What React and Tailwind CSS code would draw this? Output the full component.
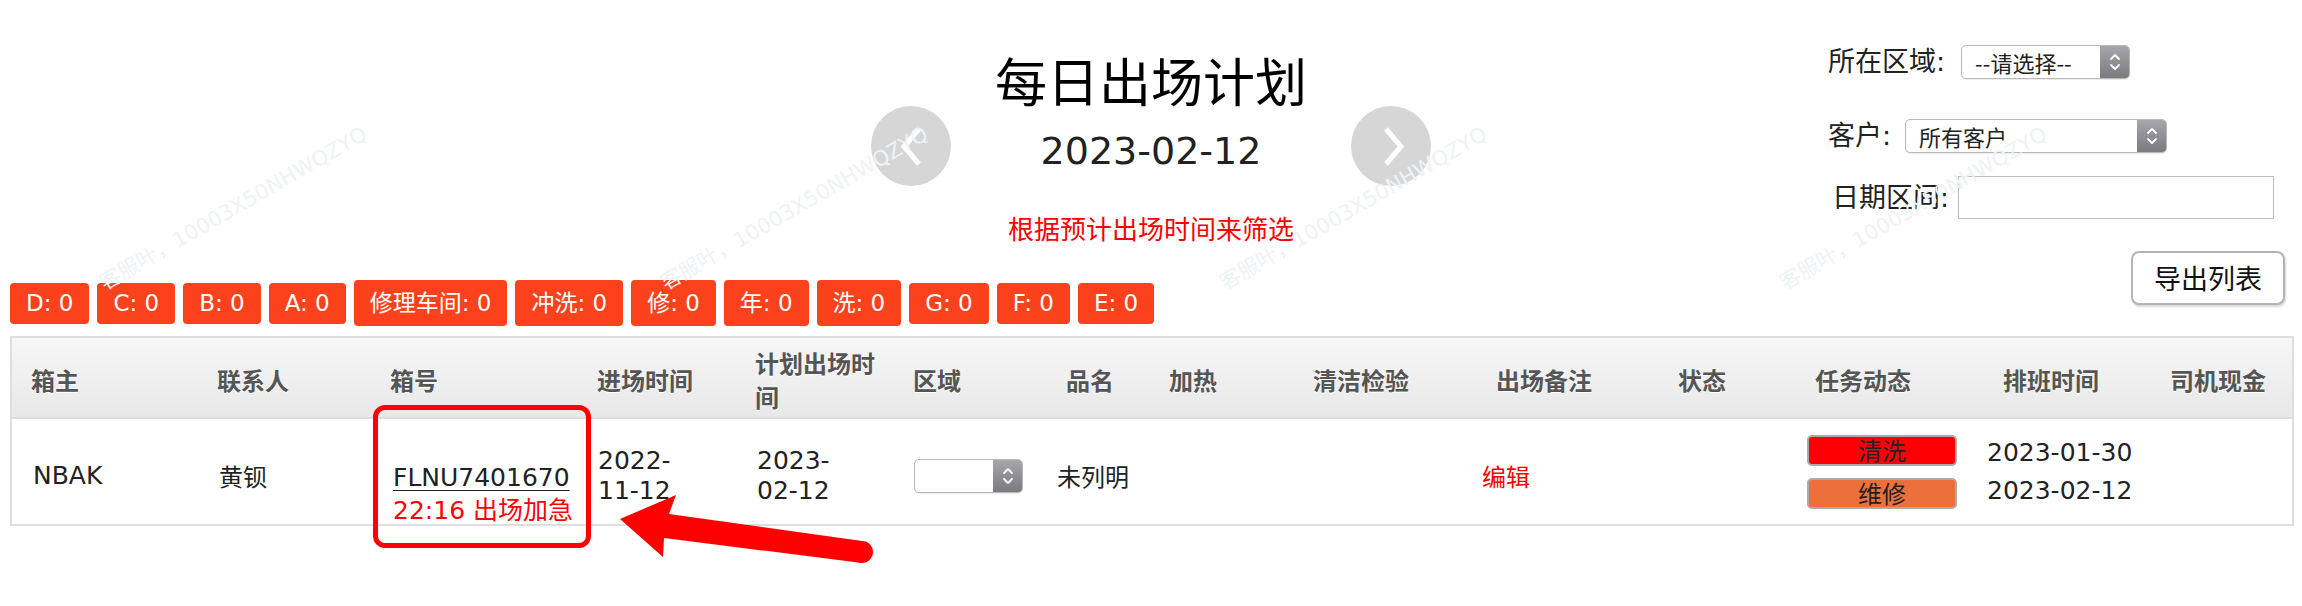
import React from 'react';

const mix = "font-['DejaVu_Sans','Noto_Sans_CJK_SC',sans-serif]";
const cjk = "font-['Noto_Sans_CJK_SC',sans-serif]";

const counts = [
  { label: 'D', wide: false },
  { label: 'C', wide: false },
  { label: 'B', wide: false },
  { label: 'A', wide: false },
  { label: '修理车间', wide: true },
  { label: '冲洗', wide: true },
  { label: '修', wide: true },
  { label: '年', wide: true },
  { label: '洗', wide: true },
  { label: 'G', wide: false },
  { label: 'F', wide: false },
  { label: 'E', wide: false },
];

const headers = [
  ['箱主', 'w-[186px]'],
  ['联系人', 'w-[173px]'],
  ['箱号', 'w-[207px]'],
  ['进场时间', 'w-[158px]'],
  ['计划出场时间', 'w-[158px]'],
  ['区域', 'w-[153px]'],
  ['品名', 'w-[103px]'],
  ['加热', 'w-[144px]'],
  ['清洁检验', 'w-[183px]'],
  ['出场备注', 'w-[182px]'],
  ['状态', 'w-[137px]'],
  ['任务动态', 'w-[188px]'],
  ['排班时间', 'w-[167px]'],
  ['司机现金', 'flex-1'],
];

const watermarks = ['left-[107px]', 'left-[668px]', 'left-[1227px]', 'left-[1787px]'];

const Chevrons = () => (
  <svg width="12" height="22" viewBox="0 0 12 22">
    <path d="M2 8 L6 4 L10 8 M2 14 L6 18 L10 14" fill="none" stroke="#fff" strokeWidth="1.8" strokeLinecap="round" strokeLinejoin="round" />
  </svg>
);

const FakeSelect = ({ width, text }) => (
  <div className={`flex h-[34px] ${width} overflow-hidden rounded-[5px] border border-[#b9b9b9] bg-white shadow-[0_1px_1px_rgba(0,0,0,0.08)]`}>
    <div className={`${cjk} flex flex-1 items-center pl-[13px] text-[22px] text-[#222]`}>{text}</div>
    <div className="flex w-[29px] items-center justify-center bg-linear-to-b from-[#a6a6ab] to-[#7a7a7f]">
      <Chevrons />
    </div>
  </div>
);

const CircleBtn = ({ right }) => (
  <div className="flex h-[80px] w-[80px] items-center justify-center rounded-full bg-[#d6d6d6]">
    <svg width="30" height="45" viewBox="0 0 30 45" className={right ? 'ml-[6px]' : ''}>
      {right ? (
        <path d="M7 5 L22 22.5 L7 40" fill="none" stroke="#fff" strokeWidth="5" />
      ) : (
        <path d="M23 5 L8 22.5 L23 40" fill="none" stroke="#fff" strokeWidth="5" />
      )}
    </svg>
  </div>
);

const App = () => {
  return (
    <div className={`relative min-h-[606px] w-full overflow-hidden bg-white ${mix} text-[#222]`}>
      {/* top: title block + filters */}
      <div className="grid h-[251px] grid-cols-[1fr_auto_1fr]">
        <div />
        <div className="flex flex-col items-center pt-[54px]">
          <h1 className={`${cjk} text-[52px] leading-[52px] text-black`}>每日出场计划</h1>
          <div className="flex items-center gap-[90px]">
            <CircleBtn />
            <div className="mt-[10px] text-[38px] leading-[38px] text-[#222]">2023-02-12</div>
            <CircleBtn right />
          </div>
          <p className={`${cjk} mt-[29px] text-[26px] leading-[26px] text-[#ff0000]`}>根据预计出场时间来筛选</p>
        </div>
        <div className="mr-[28px] flex w-[446px] flex-col justify-self-end pt-[45px]">
          <div className="flex items-center gap-[16px]">
            <span className="text-[27px] leading-[34px]">所在区域:</span>
            <FakeSelect width="w-[169px]" text="--请选择--" />
          </div>
          <div className="mt-[40px] flex items-center gap-[14px]">
            <span className="text-[27px] leading-[34px]">客户:</span>
            <FakeSelect width="w-[262px]" text="所有客户" />
          </div>
          <div className="mt-[23px] flex items-center justify-between">
            <span className="pl-[4px] text-[27px] leading-[34px]">日期区间:</span>
            <div className="h-[43px] w-[316px] border border-[#bdbdbd] bg-white" />
          </div>
        </div>
      </div>

      {/* counters + export */}
      <div className="flex items-start justify-between pl-[10px] pr-[17px]">
        <div className="mt-[29px] flex h-[46px] items-center gap-[8px]">
          {counts.map((c) => (
            <div
              key={c.label}
              className={`flex items-center rounded-[4px] bg-[#fc421c] px-[16px] text-[23px] text-white ${c.wide ? 'h-[46px]' : 'h-[41px]'}`}
            >
              {c.label}: 0
            </div>
          ))}
        </div>
        <button className={`${cjk} h-[54px] w-[154px] rounded-[8px] border-2 border-[#b4b4b4] bg-white text-[27px] text-[#111] shadow-[1px_2px_2px_rgba(0,0,0,0.15)]`}>
          导出列表
        </button>
      </div>

      {/* table */}
      <div className="ml-[10px] mr-[8px] mt-[10px] border-2 border-[#dedede]">
        <div className="flex h-[81px] items-center border-b-2 border-[#dedede] bg-linear-to-b from-[#f7f7f7] to-[#e8e8e8] pt-[4px]">
          {headers.map(([h, w]) => (
            <div
              key={h}
              className={`${w} ${cjk} shrink-0 pl-[19px] pr-[10px] text-[24px] font-bold leading-[34px] text-[#555] [text-shadow:0_1px_0_#fff]`}
            >
              {h}
            </div>
          ))}
        </div>
        <div className="flex h-[105px] items-center pt-[8px] text-[25px]">
          <div className="w-[186px] shrink-0 pl-[21px]">NBAK</div>
          <div className={`w-[174px] shrink-0 pl-[21px] ${cjk} text-[24px]`}>黄钡</div>
          <div className="flex w-[205px] shrink-0 flex-col pl-[21px] pt-[36px] leading-[33px]">
            <span className="underline decoration-1 underline-offset-[4px]">FLNU7401670</span>
            <span className="text-[#ff0000]">22:16 出场加急</span>
          </div>
          <div className="w-[159px] shrink-0 pl-[21px] leading-[30px]">
            2022-
            <br />
            11-12
          </div>
          <div className="w-[157px] shrink-0 pl-[21px] leading-[30px]">
            2023-
            <br />
            02-12
          </div>
          <div className="w-[143px] shrink-0 pl-[21px]">
            <FakeSelect width="w-[109px]" text="" />
          </div>
          <div className={`w-[112px] shrink-0 pl-[21px] ${cjk} text-[24px]`}>未列明</div>
          <div className="w-[144px] shrink-0" />
          <div className="w-[169px] shrink-0" />
          <div className={`w-[196px] shrink-0 pl-[21px] ${cjk} text-[24px] text-[#ff0000]`}>编辑</div>
          <div className="w-[129px] shrink-0" />
          <div className={`flex w-[180px] shrink-0 flex-col gap-[12px] pb-[8px] pl-[21px] ${cjk} text-[24px]`}>
            <div className="flex h-[31px] w-[150px] items-center justify-center rounded-[5px] border-2 border-[#aaa] bg-[#fd0006] leading-none text-[#222]">清洗</div>
            <div className="flex h-[31px] w-[150px] items-center justify-center rounded-[5px] border-2 border-[#aaa] bg-[#ec703c] leading-none text-[#222]">维修</div>
          </div>
          <div className="w-[183px] shrink-0 pb-[8px] pl-[21px] leading-[38px]">
            2023-01-30
            <br />
            2023-02-12
          </div>
          <div className="flex-1" />
        </div>
      </div>

      {/* screenshot annotation */}
      <div className="pointer-events-none absolute left-[373px] top-[405px] h-[143px] w-[218px] rounded-[12px] border-[5px] border-[#ff0000]" />
      <svg className="pointer-events-none absolute left-0 top-0" width="2302" height="606">
        <polygon points="620,519 676,495 669,514 862,541 862,563 664,538 663,557" fill="#ff0000" />
        <circle cx="862" cy="552" r="11" fill="#ff0000" />
      </svg>

      {/* watermark */}
      {watermarks.map((m) => (
        <div
          key={m}
          className={`pointer-events-none absolute top-[272px] ${m} origin-bottom-left -rotate-[30deg] whitespace-nowrap text-[21px] leading-[22px] text-[#eef3f6]`}
        >
          客服叶，10003X50NHWQZYQ
        </div>
      ))}
    </div>
  );
};

export default App;
